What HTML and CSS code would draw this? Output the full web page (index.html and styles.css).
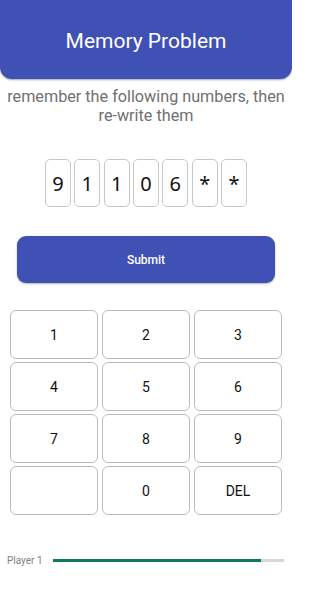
FILE: index.html
```html
<!DOCTYPE html>
<html>
<head>
<meta charset="utf-8">
<link rel="stylesheet" href="styles.css">
</head>
<body>
<div class="app">
  <header class="header"><h1 class="title">Memory Problem</h1></header>
  <p class="subtitle">remember the following numbers, then re-write them</p>
  <div class="digits">
    <div class="digit">9</div>
    <div class="digit">1</div>
    <div class="digit">1</div>
    <div class="digit">0</div>
    <div class="digit">6</div>
    <div class="digit">*</div>
    <div class="digit">*</div>
  </div>
  <button class="submit">Submit</button>
  <div class="keypad">
    <div class="key">1</div>
    <div class="key">2</div>
    <div class="key">3</div>
    <div class="key">4</div>
    <div class="key">5</div>
    <div class="key">6</div>
    <div class="key">7</div>
    <div class="key">8</div>
    <div class="key">9</div>
    <div class="key"></div>
    <div class="key">0</div>
    <div class="key">DEL</div>
  </div>
  <div class="progress-row">
    <span class="player">Player 1</span>
    <div class="track"><div class="fill" style="width:90%"></div></div>
  </div>
</div>
</body>
</html>
```

FILE: styles.css
```css
html, body {
  margin: 0;
  padding: 0;
  background: #fff;
}
body {
  font-family: Roboto, "Noto Sans", sans-serif;
  width: 292px;
  height: 592px;
  overflow: hidden;
}
.app {
  display: flex;
  flex-direction: column;
}
.header {
  height: 79px;
  background: #3f51b5;
  border-radius: 0 0 12px 12px;
  box-shadow: 0 1px 2px rgba(0,0,0,0.35);
  display: flex;
  align-items: center;
  justify-content: center;
}
.title {
  margin: 0;
  color: #fff;
  font-weight: 400;
  font-size: 21px;
  line-height: 24px;
  padding-top: 3px;
}
.subtitle {
  margin: 8px 4px 0;
  text-align: center;
  color: #707070;
  font-size: 16.2px;
  line-height: 19px;
}
.digits {
  margin-top: 34px;
  display: flex;
  justify-content: center;
  gap: 3.33px;
}
.digit {
  width: 26px;
  height: 48px;
  box-sizing: border-box;
  border: 1px solid #c8c8c8;
  border-radius: 5px;
  display: flex;
  align-items: center;
  justify-content: center;
  font-family: "Noto Sans", sans-serif;
  font-size: 20px;
  color: #111;
}
.submit {
  margin: 29px 17px 0;
  height: 47px;
  border: none;
  border-radius: 9px;
  background: #3f51b5;
  box-shadow: 0 1px 2px rgba(0,0,0,0.3);
  color: #fff;
  font-family: Roboto, sans-serif;
  font-size: 12px;
  font-weight: 500;
  padding: 0;
}
.keypad {
  margin: 27px 10px 0;
  display: grid;
  grid-template-columns: repeat(3, 88px);
  grid-auto-rows: 49px;
  column-gap: 4px;
  row-gap: 3px;
}
.key {
  box-sizing: border-box;
  border: 1px solid #bdbdbd;
  border-radius: 6px;
  display: flex;
  align-items: center;
  justify-content: center;
  font-size: 14px;
  color: #111;
}
.progress-row {
  margin-top: 38px;
  display: flex;
  align-items: center;
  padding: 0 8px 0 7px;
  height: 14px;
}
.player {
  font-size: 10px;
  color: #808080;
  width: 46px;
}
.track {
  flex: 1;
  height: 3px;
  background: #d6d6d6;
}
.fill {
  height: 100%;
  background: #0b7a5e;
}
```
